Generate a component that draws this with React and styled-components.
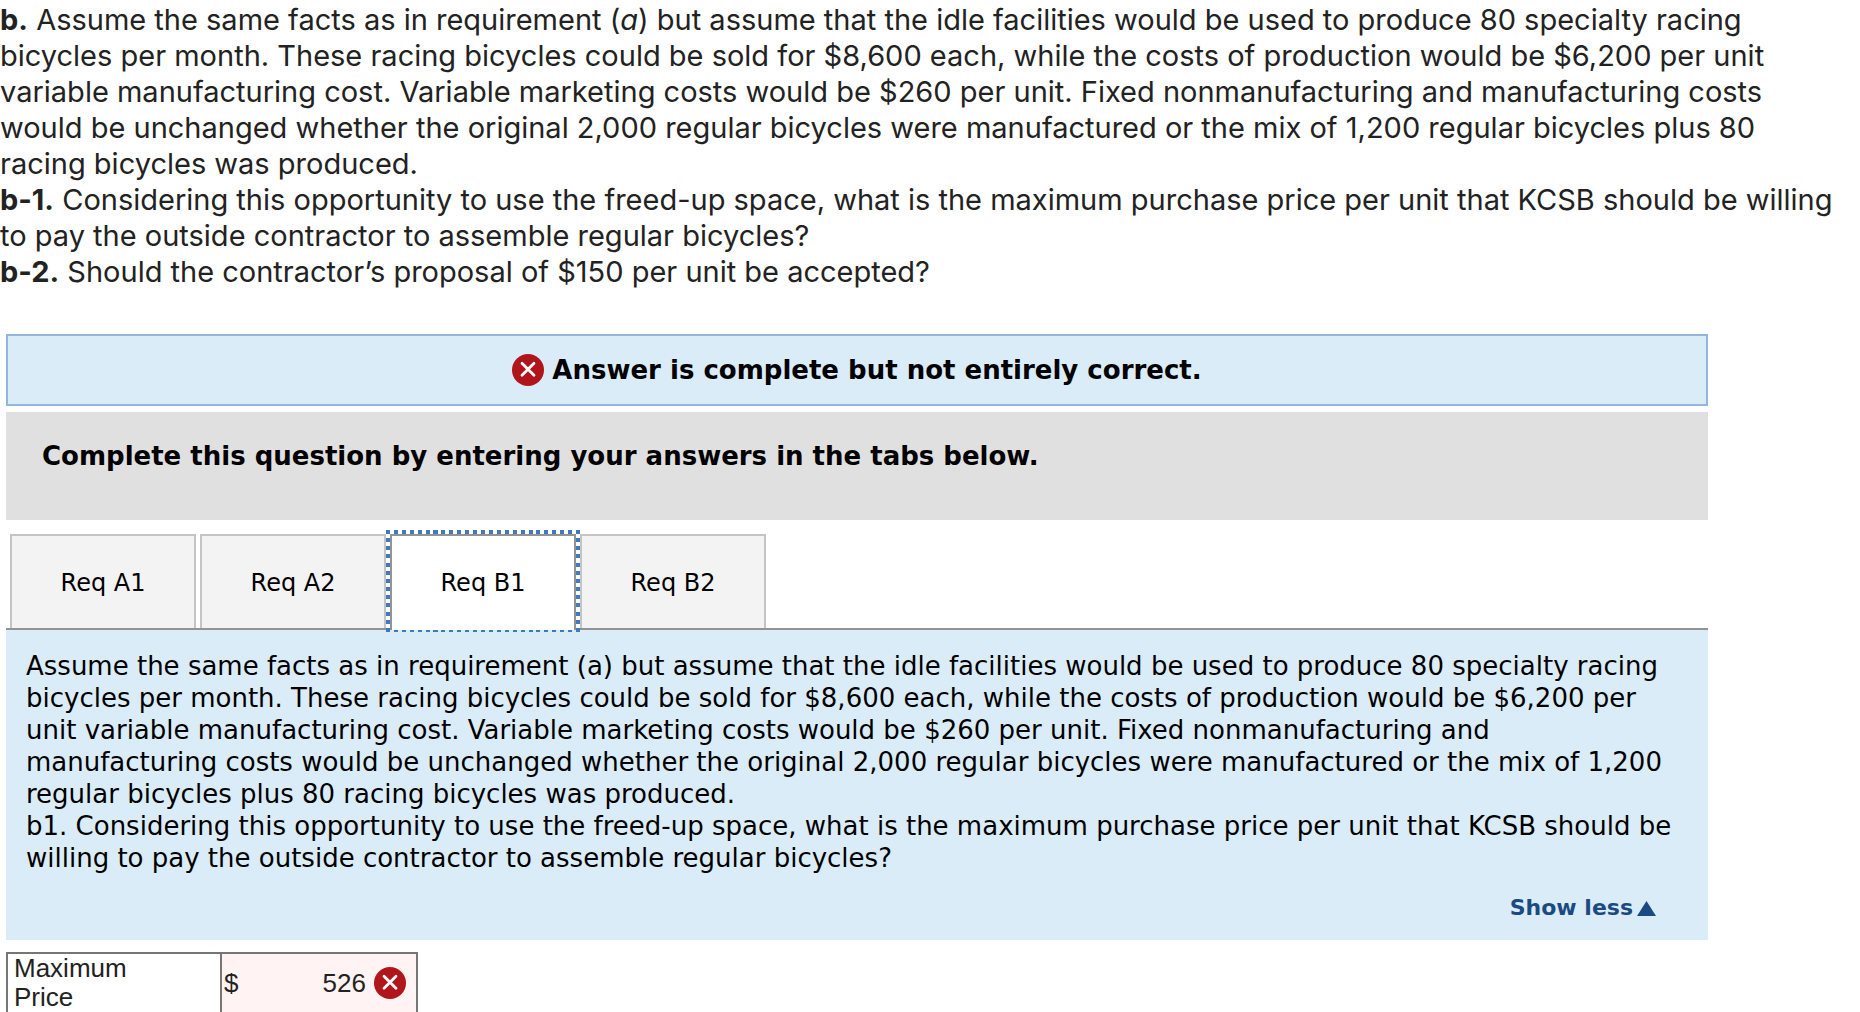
import React, { useState } from 'react';
import styled, { createGlobalStyle } from 'styled-components';

const GlobalStyle = createGlobalStyle`
  * {
    box-sizing: border-box;
  }

  body {
    margin: 0;
    background: #fff;
    color: #000;
    font-family: 'DejaVu Sans', Verdana, sans-serif;
    font-size: 26px;
    line-height: 32px;
  }
`;

const Page = styled.main`
  height: 100vh;
  overflow: hidden;
`;

const Question = styled.section`
  padding-top: 2px;
  color: #222;
  font-family: Inter, sans-serif;
  font-size: 29px;
  line-height: 36px;

  p {
    margin: 0;
  }
`;

const Worksheet = styled.section`
  margin: 44px 152px 0 6px;
`;

const Alert = styled.div`
  display: flex;
  align-items: center;
  justify-content: center;
  gap: 8px;
  padding: 18px;
  border: 2px solid #93b7dc;
  background: #daecf8;
  font-weight: 700;
`;

const Prompt = styled.h2`
  margin: 6px 0 0;
  padding: 28px 36px 48px;
  background: #e0e0e0;
  font-size: 26px;
  font-weight: 700;
  line-height: 32px;
`;

const TabList = styled.div`
  display: flex;
  gap: 4px;
  margin-top: 14px;
  padding-left: 4px;
  border-bottom: 2px solid #939393;
`;

const dots = (angle, count) =>
  `repeating-linear-gradient(${angle}, #3d7abf 0 4px, transparent 4px calc((100% - 4px) / ${count}))`;

const Tab = styled.button`
  position: relative;
  width: 186px;
  height: ${props => props.$active ? '96px' : '94px'};
  margin: 0 0 ${props => props.$active ? '-2px' : '0'};
  padding: ${props => props.$active ? '2px 0' : '2px 0 0'};
  border: 2px solid ${props => props.$active ? '#939393' : '#c4c4c4'};
  border-bottom: none;
  background: ${props => props.$active ? '#fff' : '#f3f3f3'};
  color: #000;
  font-family: inherit;
  font-size: 24px;
  line-height: 32px;
  cursor: pointer;
  outline: none;

  /* square-dotted focus ring */
  &::after {
    content: '';
    display: ${props => props.$active ? 'block' : 'none'};
    position: absolute;
    inset: -6px -6px -2px;
    background:
      ${dots('90deg', 24)} top / 100% 4px no-repeat,
      ${dots('90deg', 24)} bottom / 100% 2px no-repeat,
      ${dots('180deg', 12)} left / 4px 100% no-repeat,
      ${dots('180deg', 12)} right / 4px 100% no-repeat;
    pointer-events: none;
  }
`;

const Panel = styled.div`
  padding: 20px 20px 16px;
  background: #daecf8;

  p {
    margin: 0;
  }
`;

const PanelFooter = styled.div`
  display: flex;
  justify-content: flex-end;
  margin-top: 18px;
  padding-right: 32px;
`;

const ShowLess = styled.button`
  display: flex;
  align-items: center;
  gap: 4px;
  padding: 0;
  border: none;
  background: none;
  color: #1b4a80;
  font-family: inherit;
  font-size: 22px;
  font-weight: 700;
  line-height: 32px;
  cursor: pointer;
`;

const AnswerTable = styled.table`
  width: 412px;
  margin-top: 12px;
  border-collapse: separate;
  border-spacing: 0;
  border: 2px solid #767676;
  color: #222;
  font-family: 'Liberation Sans', Arial, sans-serif;
  font-size: 26px;
  line-height: 29px;
  table-layout: fixed;
`;

const LabelCell = styled.th`
  width: 214px;
  padding: 0 60px 0 6px;
  border-right: 2px solid #767676;
  font-weight: 400;
  text-align: left;
`;

const ValueCell = styled.td`
  padding: 0 10px 0 2px;
  background: #fff4f3;
`;

const ValueRow = styled.div`
  display: flex;
  align-items: center;
  gap: 8px;
`;

const ValueInput = styled.input`
  flex: 1;
  min-width: 0;
  padding: 0;
  border: none;
  background: none;
  color: inherit;
  font: inherit;
  text-align: right;
  outline: none;
`;

const WrongIcon = () => (
  <svg width="32" height="32" viewBox="0 0 32 32" aria-hidden="true">
    <circle cx="16" cy="16" r="16" fill="#b1151c" />
    <path
      d="M10 9.2l12 12M22 9.2L10 21.2"
      stroke="#fff"
      strokeWidth="2.8"
      strokeLinecap="round"
    />
  </svg>
);

const tabs = ['Req A1', 'Req A2', 'Req B1', 'Req B2'];

const App = () => {
  const [active, setActive] = useState('Req B1');
  const [price, setPrice] = useState('526');

  return (
    <Page>
      <GlobalStyle />
      <Question>
        <p>
          <b>b.</b> Assume the same facts as in requirement (<i>a</i>) but assume that the idle facilities would be used to produce 80 specialty racing<br />
          bicycles per month. These racing bicycles could be sold for $8,600 each, while the costs of production would be $6,200 per unit<br />
          variable manufacturing cost. Variable marketing costs would be $260 per unit. Fixed nonmanufacturing and manufacturing costs<br />
          would be unchanged whether the original 2,000 regular bicycles were manufactured or the mix of 1,200 regular bicycles plus 80<br />
          racing bicycles was produced.
        </p>
        <p>
          <b>b-1.</b> Considering this opportunity to use the freed-up space, what is the maximum purchase price per unit that KCSB should be willing<br />
          to pay the outside contractor to assemble regular bicycles?
        </p>
        <p><b>b-2.</b> Should the contractor’s proposal of $150 per unit be accepted?</p>
      </Question>

      <Worksheet>
        <Alert role="status">
          <WrongIcon />
          <span>Answer is complete but not entirely correct.</span>
        </Alert>
        <Prompt>Complete this question by entering your answers in the tabs below.</Prompt>

        <TabList role="tablist">
          {tabs.map(tab => (
            <Tab
              key={tab}
              role="tab"
              aria-selected={tab === active}
              $active={tab === active}
              onClick={() => setActive(tab)}
            >
              {tab}
            </Tab>
          ))}
        </TabList>

        <Panel role="tabpanel">
          <p>
            Assume the same facts as in requirement (a) but assume that the idle facilities would be used to produce 80 specialty racing
            bicycles per month. These racing bicycles could be sold for $8,600 each, while the costs of production would be $6,200 per
            unit variable manufacturing cost. Variable marketing costs would be $260 per unit. Fixed nonmanufacturing and
            manufacturing costs would be unchanged whether the original 2,000 regular bicycles were manufactured or the mix of 1,200
            regular bicycles plus 80 racing bicycles was produced.
          </p>
          <p>
            b1. Considering this opportunity to use the freed-up space, what is the maximum purchase price per unit that KCSB should be
            willing to pay the outside contractor to assemble regular bicycles?
          </p>
          <PanelFooter>
            <ShowLess type="button">
              Show less
              <svg width="19" height="15" viewBox="0 0 19 15" aria-hidden="true">
                <path d="M9.5 0L19 15H0z" fill="currentColor" />
              </svg>
            </ShowLess>
          </PanelFooter>
        </Panel>

        <AnswerTable>
          <tbody>
            <tr>
              <LabelCell scope="row">
                <label htmlFor="price">Maximum Price</label>
              </LabelCell>
              <ValueCell>
                <ValueRow>
                  <span>$</span>
                  <ValueInput id="price" value={price} onChange={e => setPrice(e.target.value)} />
                  <WrongIcon />
                </ValueRow>
              </ValueCell>
            </tr>
          </tbody>
        </AnswerTable>
      </Worksheet>
    </Page>
  );
};

export default App;
